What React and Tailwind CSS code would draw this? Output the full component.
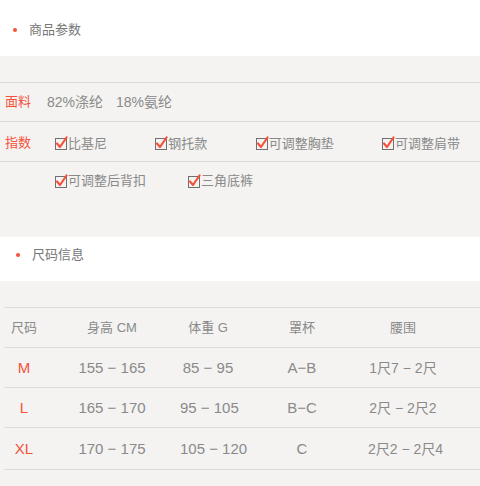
import React from 'react';

const CheckBox = () => (
  <svg width="13" height="14" viewBox="0 0 13 14" className="shrink-0">
    <rect x="0.5" y="2.5" width="11" height="11" fill="none" stroke="#707070" strokeWidth="1" />
    <path d="M2 7.5 L5 11 L11.5 1.5" fill="none" stroke="#f4523b" strokeWidth="2.2" strokeLinecap="round" strokeLinejoin="round" />
  </svg>
);

const Tag = ({ label }) => (
  <div className="flex items-center">
    <CheckBox />
    <span className="text-[13px] leading-none text-[#8a8a8a]">{label}</span>
  </div>
);

const SectionTitle = ({ title, className }) => (
  <div className={`bg-white flex items-center ${className}`}>
    <span className="w-[4px] h-[4px] rounded-full bg-[#f4523b]" />
    <span className="ml-[12px] text-[13px] leading-[20px] text-[#777]">{title}</span>
  </div>
);

const columns = ['w-[40px]', 'w-[136px]', 'w-[56px]', 'w-[132px]', 'w-[70px]'];

const sizes = [
  ['M', '155 − 165', '85 − 95', 'A−B', '1尺7 − 2尺', 'h-[40px]'],
  ['L', '165 − 170', '95 − 105', 'B−C', '2尺 − 2尺2', 'h-[40px]'],
  ['XL', '170 − 175', '105 − 120', 'C', '2尺2 − 2尺4', 'h-[42px]'],
];

export default function App() {
  return (
    <div className="w-[480px] h-[486px] overflow-hidden bg-[#f4f3f1] font-['Liberation_Sans','Noto_Sans_CJK_SC',sans-serif]">
      {/* 商品参数 */}
      <SectionTitle title="商品参数" className="h-[56px] pl-[13px] pt-[3px]" />

      <div className="h-[181px] pt-[26px]">
        <div className="border-t border-[#dcdbd9]">
          <div className="h-[39px] flex items-center border-b border-[#dcdbd9] pl-[5px]">
            <span className="w-[42px] text-[13px] text-[#f4523b]">面料</span>
            <span className="text-[14px] text-[#8a8a8a]">82%涤纶</span>
            <span className="ml-[13px] text-[14px] text-[#8a8a8a]">18%氨纶</span>
          </div>
          <div className="h-[40px] flex items-center border-b border-[#dcdbd9] pl-[5px] pr-[20px] pt-[3px]">
            <span className="w-[50px] text-[13px] text-[#f4523b]">指数</span>
            <div className="flex-1 flex justify-between">
              <Tag label="比基尼" />
              <Tag label="钢托款" />
              <Tag label="可调整胸垫" />
              <Tag label="可调整肩带" />
            </div>
          </div>
          <div className="h-[37px] flex items-center pl-[55px]">
            <Tag label="可调整后背扣" />
            <div className="ml-[42px]">
              <Tag label="三角底裤" />
            </div>
          </div>
        </div>
      </div>

      {/* 尺码信息 */}
      <SectionTitle title="尺码信息" className="h-[44px] pl-[16px] pb-[8px]" />

      <div className="pt-[26px] pl-[4px]">
        <div className="border-t border-[#dcdbd9]">
          <div className="h-[40px] flex items-center border-b border-[#dcdbd9] text-[13px] text-[#8a8a8a]">
            {['尺码', '身高 CM', '体重 G', '罩杯', '腰围'].map((h, i) => (
              <span key={h} className={`${columns[i]} text-center whitespace-nowrap`}>{h}</span>
            ))}
          </div>
          {sizes.map((row) => (
            <div key={row[0]} className={`${row[5]} pt-[2px] flex items-center border-b border-[#dcdbd9] text-[#8a8a8a]`}>
              {row.slice(0, 5).map((cell, i) => (
                <span
                  key={i}
                  className={`${columns[i]} text-center whitespace-nowrap ${
                    i === 0 ? 'text-[15px] text-[#f4523b]' : i === 4 ? 'text-[14px]' : 'text-[15px]'
                  }`}
                >
                  {cell}
                </span>
              ))}
            </div>
          ))}
        </div>
      </div>
    </div>
  );
}
